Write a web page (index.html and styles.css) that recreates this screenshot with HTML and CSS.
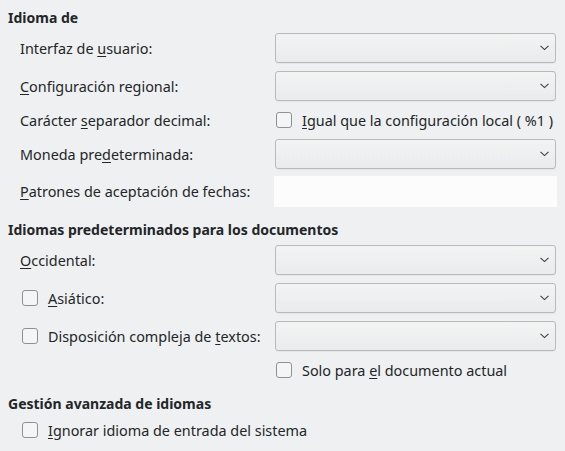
FILE: index.html
```html
<!DOCTYPE html>
<html lang="es">
<head>
<meta charset="utf-8">
<title>Idiomas</title>
<link rel="stylesheet" href="styles.css">
</head>
<body>
<div class="page">
  <h2 class="head">Idioma de</h2>
  <div class="rows">
    <div class="row">
      <span class="label">Interfaz de <u>u</u>suario:</span>
      <div class="combo"><svg class="chev" width="9" height="6" viewBox="0 0 9 6"><polyline points="0.5,0.8 4.5,4.6 8.5,0.8"/></svg></div>
    </div>
    <div class="row">
      <span class="label"><u>C</u>onfiguración regional:</span>
      <div class="combo"><svg class="chev" width="9" height="6" viewBox="0 0 9 6"><polyline points="0.5,0.8 4.5,4.6 8.5,0.8"/></svg></div>
    </div>
    <div class="row check">
      <span class="label">Carácter <u>s</u>eparador decimal:</span>
      <div class="checkwrap right"><span class="box"></span><span class="ctext"><u>I</u>gual que la configuración local ( %1 )</span></div>
    </div>
    <div class="row">
      <span class="label">Moneda pre<u>d</u>eterminada:</span>
      <div class="combo"><svg class="chev" width="9" height="6" viewBox="0 0 9 6"><polyline points="0.5,0.8 4.5,4.6 8.5,0.8"/></svg></div>
    </div>
    <div class="row date">
      <span class="label"><u>P</u>atrones de aceptación de fechas:</span>
      <div class="field"></div>
    </div>
  </div>

  <h2 class="head next">Idiomas predeterminados para los documentos</h2>
  <div class="rows">
    <div class="row">
      <span class="label"><u>O</u>ccidental:</span>
      <div class="combo"><svg class="chev" width="9" height="6" viewBox="0 0 9 6"><polyline points="0.5,0.8 4.5,4.6 8.5,0.8"/></svg></div>
    </div>
    <div class="row">
      <span class="label checkwrap left"><span class="box"></span><span class="ctext"><u>A</u>siático:</span></span>
      <div class="combo"><svg class="chev" width="9" height="6" viewBox="0 0 9 6"><polyline points="0.5,0.8 4.5,4.6 8.5,0.8"/></svg></div>
    </div>
    <div class="row">
      <span class="label checkwrap left"><span class="box"></span><span class="ctext">Disposición compleja de <u>t</u>extos:</span></span>
      <div class="combo"><svg class="chev" width="9" height="6" viewBox="0 0 9 6"><polyline points="0.5,0.8 4.5,4.6 8.5,0.8"/></svg></div>
    </div>
    <div class="row check">
      <span class="label"></span>
      <div class="checkwrap right"><span class="box"></span><span class="ctext">Solo para <u>e</u>l documento actual</span></div>
    </div>
  </div>

  <h2 class="head next">Gestión avanzada de idiomas</h2>
  <div class="rows">
    <div class="row check">
      <span class="checkwrap left"><span class="box"></span><span class="ctext"><u>I</u>gnorar idioma de entrada del sistema</span></span>
    </div>
  </div>
</div>
</body>
</html>
```

FILE: styles.css
```css
html, body {
  margin: 0;
  padding: 0;
  background: #eff0f1;
}
body {
  width: 565px;
  height: 451px;
  overflow: hidden;
  font-family: "Noto Sans", "DejaVu Sans", sans-serif;
  font-size: 14.4px;
  color: #232629;
}
.page {
  padding: 8px 8px 0 8px;
}
.head {
  margin: 0;
  font-size: 14px;
  font-weight: 700;
  line-height: 19px;
  height: 19px;
}
.head.next {
  margin-top: 13px;
}
.rows {
  margin-top: 6px;
  padding-left: 12px;
  display: flex;
  flex-direction: column;
  gap: 8px;
}
.row {
  display: flex;
  align-items: center;
  height: 30px;
}
.row.check {
  height: 22px;
}
.row.date {
  height: 31px;
  margin-top: -1px;
}
.label {
  box-sizing: border-box;
  width: 255px;
  flex: none;
  line-height: 19px;
  white-space: nowrap;
}
u {
  text-decoration: underline;
  text-underline-offset: 2px;
  text-decoration-thickness: 1px;
}
.combo {
  position: relative;
  box-sizing: border-box;
  width: 281px;
  height: 30px;
  border: 1px solid #b9babc;
  border-radius: 3px;
  background: linear-gradient(#f2f3f3, #eaebec);
  box-shadow: 0 1px 0 rgba(0, 0, 0, 0.04);
}
.chev {
  position: absolute;
  right: 6px;
  top: 11px;
}
.chev polyline {
  fill: none;
  stroke: #3b3e41;
  stroke-width: 1.1;
}
.field {
  width: 283px;
  height: 31px;
  margin-left: -1px;
  background: #fcfcfc;
}
.checkwrap {
  display: flex;
  align-items: center;
  white-space: nowrap;
  line-height: 19px;
}
.checkwrap.left {
  padding-left: 2px;
}
.checkwrap.right {
  padding-left: 1px;
}
.box {
  box-sizing: border-box;
  width: 16px;
  height: 16px;
  flex: none;
  border: 1px solid #8f9193;
  border-radius: 3px;
  background: #f4f5f5;
  margin-right: 10px;
}
```
